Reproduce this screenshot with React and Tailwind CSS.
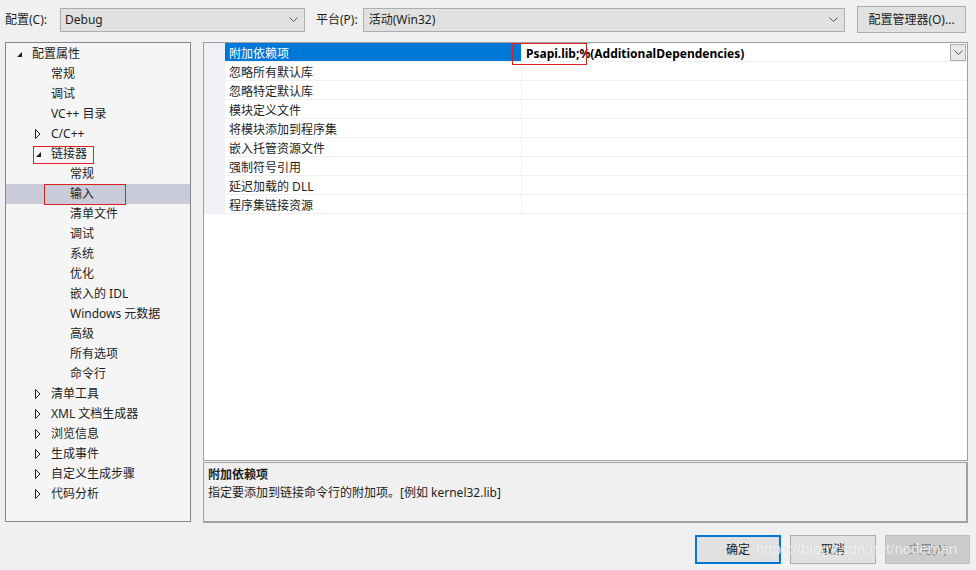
import React from "react";

const font = { fontFamily: '"Noto Sans", "Noto Sans CJK SC", sans-serif' };

const tree = [
  { label: "配置属性", level: 0, arrow: "open" },
  { label: "常规", level: 1 },
  { label: "调试", level: 1 },
  { label: "VC++ 目录", level: 1 },
  { label: "C/C++", level: 1, arrow: "closed" },
  { label: "链接器", level: 1, arrow: "open", boxed: true },
  { label: "常规", level: 2 },
  { label: "输入", level: 2, selected: true },
  { label: "清单文件", level: 2 },
  { label: "调试", level: 2 },
  { label: "系统", level: 2 },
  { label: "优化", level: 2 },
  { label: "嵌入的 IDL", level: 2 },
  { label: "Windows 元数据", level: 2 },
  { label: "高级", level: 2 },
  { label: "所有选项", level: 2 },
  { label: "命令行", level: 2 },
  { label: "清单工具", level: 1, arrow: "closed" },
  { label: "XML 文档生成器", level: 1, arrow: "closed" },
  { label: "浏览信息", level: 1, arrow: "closed" },
  { label: "生成事件", level: 1, arrow: "closed" },
  { label: "自定义生成步骤", level: 1, arrow: "closed" },
  { label: "代码分析", level: 1, arrow: "closed" },
];

const props = [
  "附加依赖项",
  "忽略所有默认库",
  "忽略特定默认库",
  "模块定义文件",
  "将模块添加到程序集",
  "嵌入托管资源文件",
  "强制符号引用",
  "延迟加载的 DLL",
  "程序集链接资源",
];

function Chevron() {
  return (
    <svg width="9" height="6" viewBox="0 0 9 6">
      <path d="M0.5 0.5 L4.5 4.5 L8.5 0.5" fill="none" stroke="#555" strokeWidth="1" />
    </svg>
  );
}

function Arrow({ kind }) {
  if (kind === "open")
    return (
      <svg width="7" height="7" viewBox="0 0 7 7">
        <path d="M6 1 L6 6 L1 6 Z" fill="#1e1e1e" />
      </svg>
    );
  return (
    <svg width="6" height="10" viewBox="0 0 6 10">
      <path d="M0.5 0.5 L5 5 L0.5 9.5 Z" fill="none" stroke="#1e1e1e" strokeWidth="1" />
    </svg>
  );
}

function TreeRow({ row }) {
  const pad = row.level === 0 ? 26 : row.level === 1 ? 45 : 64;
  return (
    <div className={`relative h-[20px] flex items-center ${row.selected ? "bg-[#cacbd9]" : ""}`}>
      {row.arrow && (
        <span
          className="absolute flex items-center justify-center w-[10px] h-[10px]"
          style={{ left: pad - 18, top: 5 }}
        >
          <Arrow kind={row.arrow} />
        </span>
      )}
      <span
        className="relative text-[12px] leading-[16px] text-[#1e1e1e] whitespace-nowrap"
        style={{ marginLeft: pad }}
      >
        {row.label}
        {row.boxed && (
          <span className="absolute left-[-18px] right-[-7px] top-[0px] bottom-[-2px] border border-[#e02020]" />
        )}
        {row.selected && (
          <span className="absolute left-[-26px] right-[-32px] top-[-2px] bottom-[-3px] border border-[#e02020]" />
        )}
      </span>
    </div>
  );
}

export default function App() {
  return (
    <div className="w-[976px] h-[570px] bg-[#f0f0f0] relative overflow-hidden text-[#1e1e1e]" style={font}>
      {/* top bar */}
      <div className="flex items-center h-[39px] pl-[5px] pr-[10px]">
        <span className="text-[12px] w-[55px] shrink-0 whitespace-nowrap">配置(C):</span>
        <div className="w-[245px] shrink-0 h-[24px] border border-[#adadad] bg-[#e1e1e1] flex items-center justify-between pl-[4px] pr-[6px]">
          <span className="text-[12px]">Debug</span>
          <Chevron />
        </div>
        <span className="text-[12px] ml-[11px] mr-[5px] shrink-0 whitespace-nowrap">平台(P):</span>
        <div className="flex-1 h-[24px] border border-[#adadad] bg-[#e1e1e1] flex items-center justify-between pl-[5px] pr-[6px]">
          <span className="text-[12px]">活动(Win32)</span>
          <Chevron />
        </div>
        <div className="ml-[12px] w-[109px] shrink-0 h-[27px] border border-[#adadad] bg-[#e1e1e1] flex items-center justify-center text-[12px] whitespace-nowrap">
          配置管理器(O)...
        </div>
      </div>

      {/* main */}
      <div className="flex pl-[5px] mt-[3px]">
        <div className="w-[186px] h-[480px] border border-[#828790] bg-[#f5f5f5] pt-[1px]">
          {tree.map((r, i) => (
            <TreeRow key={i} row={r} />
          ))}
        </div>

        <div className="ml-[12px] w-[765px] flex flex-col">
          <div className="h-[419px] border border-[#a0a0a0] bg-white">
            {props.map((p, i) => (
              <div key={i} className="flex h-[19px]">
                <div className="w-[21px] bg-[#f0f1f7]" />
                <div
                  className={`w-[297px] flex items-center pl-[4px] pt-[3px] text-[12px] leading-[16px] border-b border-r border-[#f0f0f0] ${
                    i === 0 ? "bg-[#0078d7] text-white border-[#0078d7]" : ""
                  }`}
                >
                  {p}
                </div>
                <div className="flex-1 relative flex items-center pt-[3px] border-b border-[#f0f0f0]">
                  {i === 0 && (
                    <>
                      <span className="pl-[4px] text-[12px] leading-[16px] font-bold text-black relative">
                        Psapi.lib;%(AdditionalDependencies)
                        <span className="absolute left-[-10px] top-[-3px] w-[75px] h-[22px] border border-[#e02020]" />
                      </span>
                      <span className="absolute right-[1px] top-[1px] w-[16px] h-[17px] border border-[#adadad] bg-[#e8e8e8] flex items-center justify-center">
                        <Chevron />
                      </span>
                    </>
                  )}
                </div>
              </div>
            ))}
          </div>
          <div className="mt-[1px] h-[61px] border-2 border-[#a0a0a0] border-l border-t bg-[#f0f0f0] pl-[4px] pt-[3px]">
            <div className="text-[12px] font-bold leading-[18px]">附加依赖项</div>
            <div className="text-[12px] leading-[18px]">指定要添加到链接命令行的附加项。[例如 kernel32.lib]</div>
          </div>
        </div>
      </div>

      {/* buttons */}
      <div className="flex justify-end pr-[6px] mt-[12px] gap-[9px]">
        <div className="w-[86px] h-[29px] border-2 border-[#0078d7] bg-[#e1e1e1] flex items-center justify-center text-[12px]">确定</div>
        <div className="w-[86px] h-[29px] border border-[#adadad] bg-[#e1e1e1] flex items-center justify-center text-[12px]">取消</div>
        <div className="w-[85px] h-[29px] border border-[#bfbfbf] bg-[#cccccc] flex items-center justify-center text-[12px] text-[#838383]">应用(A)</div>
      </div>

      <span
        className="absolute left-[756px] top-[538px] text-[15px] text-white/80 whitespace-nowrap pointer-events-none"
        style={{ fontFamily: '"Liberation Sans", Arial, sans-serif', textShadow: "0 0 1px rgba(0,0,0,0.15)" }}
      >
        https://blog.csdn.net/nodeman
      </span>
    </div>
  );
}
